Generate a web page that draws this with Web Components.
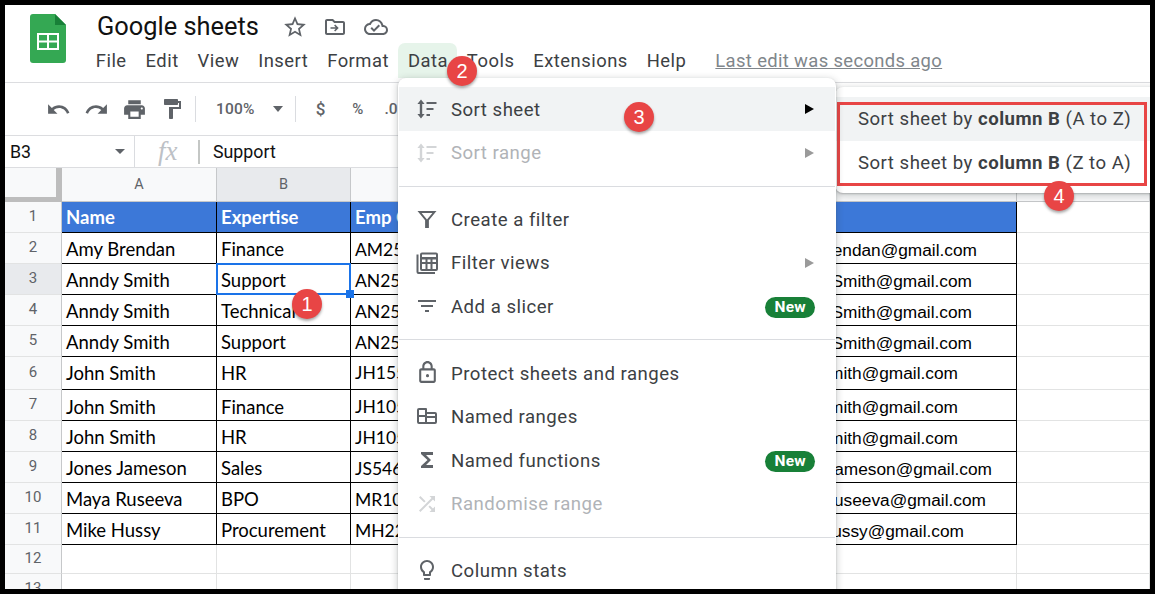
<!DOCTYPE html>
<html><head><meta charset="utf-8">
<style>
html,body{margin:0;padding:0;background:#000;overflow:hidden}
body{font-family:Roboto,"Liberation Sans",sans-serif}
</style></head><body>
<sheet-app></sheet-app>
<script>
const ICONS={
undo:'<path d="M12.5 8c-2.65 0-5.05.99-6.9 2.6L2 7v9h9l-3.62-3.62c1.39-1.16 3.16-1.88 5.12-1.88 3.54 0 6.55 2.31 7.6 5.5l2.37-.78C21.08 11.03 17.15 8 12.5 8z"/>',
redo:'<path d="M18.4 10.6C16.55 8.99 14.15 8 11.5 8c-4.65 0-8.58 3.03-9.96 7.22L3.9 16c1.05-3.19 4.05-5.5 7.6-5.5 1.95 0 3.73.72 5.12 1.88L13 16h9V7l-3.6 3.6z"/>',
print:'<path d="M19 8H5c-1.66 0-3 1.34-3 3v6h4v4h12v-4h4v-6c0-1.66-1.34-3-3-3zm-3 11H8v-5h8v5zm3-7c-.55 0-1-.45-1-1s.45-1 1-1 1 .45 1 1-.45 1-1 1zm-1-9H6v4h12V3z"/>',
paint:'<path d="M18 4V3c0-.55-.45-1-1-1H5c-.55 0-1 .45-1 1v4c0 .55.45 1 1 1h12c.55 0 1-.45 1-1V6h1v4H9v11c0 .55.45 1 1 1h2c.55 0 1-.45 1-1v-9h8V4h-3z"/>',
star:'<path d="M22 9.24l-7.19-.62L12 2 9.19 8.63 2 9.24l5.46 4.73L5.82 21 12 17.27 18.18 21l-1.63-7.03L22 9.24zM12 15.4l-3.76 2.27 1-4.28-3.32-2.88 4.38-.38L12 6.1l1.71 4.04 4.38.38-3.32 2.88 1 4.28L12 15.4z"/>',
move:'<path d="M20 6h-8l-2-2H4c-1.1 0-2 .9-2 2v12c0 1.1.9 2 2 2h16c1.1 0 2-.9 2-2V8c0-1.1-.9-2-2-2zm0 12H4V6h5.17l2 2H20v10z"/><path d="M12.2 9.5l3.5 3.5-3.5 3.5-1.1-1.1 1.6-1.6H7.5v-1.6h5.2l-1.6-1.6z"/>',
cloud:'<path d="M19.35 10.04A7.49 7.49 0 0012 4C9.11 4 6.6 5.64 5.35 8.04A5.994 5.994 0 000 14c0 3.31 2.69 6 6 6h13c2.76 0 5-2.24 5-5 0-2.64-2.05-4.78-4.65-4.96zM19 18H6c-2.21 0-4-1.79-4-4 0-2.05 1.53-3.76 3.56-3.97l1.07-.11.5-.95A5.469 5.469 0 0112 6c2.62 0 4.88 1.86 5.39 4.43l.3 1.5 1.53.11A2.98 2.98 0 0122 15c0 1.65-1.35 3-3 3zm-9-3.82l-2.09-2.09L6.5 13.5 10 17l6.01-6.01-1.41-1.41z"/>',
sort:'<path d="M6 2.5L9.600 7H7.200v10h2.400L6 21.500 2.400 17h2.400V7H2.400z"/><path d="M11.500 5h10v2h-10zM11.500 11h7v2h-7zM11.500 17h3.500v2h-3.500z"/>',
filter:'<path fill-rule="evenodd" d="M2.500 4h19l-7.600 9.200V21h-3.800v-7.800zM6.600 6l5.400 6.600L17.400 6z"/>',
views:'<path d="M1.500 3.500h2V21H20v2H3.500a2 2 0 01-2-2z"/><path fill-rule="evenodd" d="M7 1.500h14a2 2 0 012 2V18a2 2 0 01-2 2H7a2 2 0 01-2-2V3.500a2 2 0 012-2zm0 2V6h14V3.500zm0 5V11h3.500V8.500zm5.500 0V11H15.500V8.500zm5 0V11H21V8.500zM7 13v5h3.500v-5zm5.500 0v5h3v-5zm5 0v5H21v-5z"/>',
slicer:'<path d="M10 18h4v-2h-4v2zM3 6v2h18V6H3zm3 7h12v-2H6v2z"/>',
lock:'<path d="M18 8h-1V6c0-2.760-2.240-5-5-5S7 3.240 7 6v2H6c-1.100 0-2 .9-2 2v10c0 1.100.9 2 2 2h12c1.100 0 2-.9 2-2V10c0-1.100-.9-2-2-2zM9 6c0-1.660 1.340-3 3-3s3 1.340 3 3v2H9V6zm9 14H6V10h12v10zm-6-3.500a1.500 1.500 0 100-3 1.500 1.500 0 000 3z"/>',
ranges:'<path fill-rule="evenodd" d="M4 4h7a1 1 0 011 1v3h8a2 2 0 012 2v8a2 2 0 01-2 2H4a2 2 0 01-2-2V6a2 2 0 012-2zm0 2v5h6V6zm8 4v2h8v-2zm-8 3v5h6v-5zm8 1v4h8v-4z"/>',
sigma:'<path d="M18 4H6v2l6.500 6L6 18v2h12v-3h-7l5-5-5-5h7z"/>',
shuffle:'<path d="M10.590 9.170L5.410 4 4 5.410l5.170 5.170 1.420-1.410zM14.500 4l2.040 2.040L4 18.590 5.410 20 17.960 7.460 20 9.500V4h-5.500zm.33 9.410l-1.410 1.410 3.130 3.130L14.500 20H20v-5.500l-2.040 2.040-3.130-3.130z"/>',
bulb:'<path d="M9 21c0 .55.45 1 1 1h4c.55 0 1-.45 1-1v-1H9v1zm3-19C8.140 2 5 5.140 5 9c0 2.380 1.190 4.470 3 5.740V17c0 .55.45 1 1 1h6c.55 0 1-.45 1-1v-2.260c1.810-1.270 3-3.360 3-5.740 0-3.860-3.140-7-7-7zm2.850 11.100l-.85.6V16h-4v-2.300l-.85-.6A4.997 4.997 0 017 9c0-2.760 2.240-5 5-5s5 2.240 5 5c0 1.630-.8 3.160-2.150 4.100z"/>'
};
function def(name,html,init){
  const t=document.createElement('template');t.innerHTML=html;
  customElements.define(name,class extends HTMLElement{
    connectedCallback(){
      if(this.shadowRoot)return;
      const r=this.attachShadow({mode:'open'});
      r.appendChild(t.content.cloneNode(true));
      if(init)init(this,r);
    }
  });
}
def('g-icon',`<style>:host{display:inline-flex;align-items:center;justify-content:center;color:inherit}svg{display:block;fill:currentColor}</style><svg viewBox="0 0 24 24"></svg>`,(h,r)=>{
  const s=r.querySelector('svg');const z=h.getAttribute('size')||24;
  s.setAttribute('width',z);s.setAttribute('height',z);
  s.innerHTML=ICONS[h.getAttribute('name')];
});
def('num-badge',`<style>:host{position:absolute;width:30px;height:30px;border-radius:50%;background:#e84545;color:#fff;display:flex;align-items:center;justify-content:center;font:400 20px/1 "Liberation Sans",Arial,sans-serif;box-shadow:0 2px 3px rgba(0,0,0,.35);z-index:9}</style><slot></slot>`,(h)=>{
  h.style.left=(+h.getAttribute('cx')-5-15)+'px';h.style.top=(+h.getAttribute('cy')-5-15)+'px';
});
def('doc-logo',`<style>:host{display:block;width:36px;height:49px}</style>
<svg width="36" height="49" viewBox="0 0 36 49"><path d="M3 0h22l11 11v35a3 3 0 01-3 3H3a3 3 0 01-3-3V3a3 3 0 013-3z" fill="#34a853"/><path d="M25 0l11 11H25z" fill="#188038"/><path fill="#fff" fill-rule="evenodd" d="M7 19h22v17H7zm2 2v5.500h8V21zm10 0v5.500h8V21zM9 28.500V34h8v-5.500zm10 0V34h8v-5.500z"/></svg>`);
def('title-bar',`<style>
:host{display:flex;flex:none;height:78px;box-sizing:border-box;border-bottom:1px solid #dcdde0;background:#fff;padding:9px 0 0 25px}
doc-logo{flex:none}
.c{margin-left:31px;display:flex;flex-direction:column}
.t{display:flex;align-items:center;height:29px;margin-top:-2px}
h1{font:400 25.400px/29px Roboto,sans-serif;color:#111;margin:0 23px 0 0}
g-icon{color:#5f6368}
nav{display:flex;align-items:flex-start;height:35px;margin-top:2px;font:400 18.400px/35px Roboto,sans-serif;letter-spacing:.5px;color:#3c4043;white-space:nowrap;margin-left:-10.700px}
nav span{padding:0 9.450px;height:35px}
nav .on{background:#e6f4ea;border-radius:7px 7px 0 0}
nav a{margin-left:19.500px;color:#80868b;text-decoration:underline;letter-spacing:.36px}
</style>
<doc-logo></doc-logo>
<div class="c"><div class="t"><h1>Google sheets</h1>
<g-icon name="star" size="26"></g-icon><g-icon name="move" size="24" style="margin-left:15px"></g-icon><g-icon name="cloud" size="24" style="margin-left:17px"></g-icon></div>
<nav><span>File</span><span>Edit</span><span>View</span><span>Insert</span><span>Format</span><span class="on">Data</span><span>Tools</span><span>Extensions</span><span>Help</span><a>Last edit was seconds ago</a></nav></div>`);
def('tool-bar',`<style>
:host{display:flex;flex:none;height:53px;box-sizing:border-box;border-bottom:1px solid #dcdde0;background:#fff;align-items:center;padding:0 0 0 34px;color:#5f6368;font:500 15.500px Roboto,sans-serif;white-space:nowrap;overflow:hidden}
.b{width:38px;display:flex;justify-content:center}
.s{width:1px;height:26px;background:#dadce0}
.c{width:0;height:0;border:5px solid transparent;border-top:6px solid #5f6368;border-bottom:0}
</style>
<div class="b"><g-icon name="undo" size="25"></g-icon></div><div class="b"><g-icon name="redo" size="25"></g-icon></div><div class="b"><g-icon name="print" size="25"></g-icon></div><div class="b"><g-icon name="paint" size="24"></g-icon></div>
<div class="s" style="margin-left:4px"></div><span style="margin-left:20px;letter-spacing:.2px">100%</span><div class="c" style="margin-left:18px"></div><div class="s" style="margin-left:12px"></div>
<span style="margin-left:20px;font-size:17px">$</span><span style="margin-left:27px;font-size:15px">%</span><span style="margin-left:21px">.0</span>`);
def('formula-bar',`<style>
:host{display:flex;flex:none;height:32px;box-sizing:border-box;border-bottom:1px solid #dcdde0;background:#fff;align-items:center;padding-left:5px;white-space:nowrap;overflow:hidden;font:400 17.800px Roboto,sans-serif;color:#111}
.n{width:105px}
.c{width:0;height:0;border:5px solid transparent;border-top:5px solid #5f6368;border-bottom:0}
.s{width:1px;background:#dadce0}
i{font:italic 400 27px "Liberation Serif",serif;color:#bdc1c6;margin-left:23px;width:40px}
</style><span class="n">B3</span><div class="c"></div><div class="s" style="height:32px;margin-left:9px"></div><i>fx</i><div class="s" style="height:24px;background:#c4c7c5;width:2px"></div><span style="margin-left:13px">Support</span>`);
const DATA=[
['Name','Expertise','Emp Code','','',],
['Amy Brendan','Finance','AM2546','Brendan@gmail.com',978],
['Anndy Smith','Support','AN2546','Smith@gmail.com',973],
['Anndy Smith','Technical','AN2547','Smith@gmail.com',973],
['Anndy Smith','Support','AN2548','Smith@gmail.com',973],
['John Smith','HR','JH1554','Smith@gmail.com',959],
['John Smith','Finance','JH1054','Smith@gmail.com',959],
['John Smith','HR','JH1055','Smith@gmail.com',959],
['Jones Jameson','Sales','JS5461','Jameson@gmail.com',993],
['Maya Ruseeva','BPO','MR1026','Ruseeva@gmail.com',987],
['Mike Hussy','Procurement','MH2235','Hussy@gmail.com',965]];
def('sheet-grid',`<style>
:host{display:grid;flex:1;min-height:0;overflow:hidden;background:#fff;grid-template-columns:57px 155px 134px 349px 317px 133px;grid-template-rows:34px 31px 31px 31px 31px 31px 33px 31px 31px 31px 31px 31px 29px 31px;color:#000;font:400 18.500px/1 Lato,Carlito,sans-serif}
div{box-sizing:border-box;white-space:nowrap;overflow:hidden;min-width:0}
.corner{border-right:6px solid #bdbdbd;border-bottom:5px solid #bdbdbd;background-color:#f8f9fa}
.ch{background:#f8f9fa;border-right:1px solid #c6c8ca;border-bottom:1px solid #c6c8ca;display:flex;align-items:center;justify-content:center;color:#5f6368;font:400 14.500px Roboto,sans-serif;padding-bottom:1px}
.ch.on,.rh.on{background:#e8eaed}
.rh{background:#f8f9fa;border-right:1px solid #c6c8ca;border-bottom:1px solid #e2e3e3;display:flex;align-items:center;justify-content:center;color:#5f6368;font:400 15px Roboto,sans-serif;padding-bottom:2px}
.c{border-right:1px solid #e2e3e3;border-bottom:1px solid #e2e3e3;display:flex;align-items:center;padding:3px 4px 0}
.t{border-right-color:#000;border-bottom-color:#000}
.h{background:#3c78d8;color:#fff;font-weight:700;font-size:18.500px;padding-top:0}
.k{font-size:17.500px}
.m{font:400 17.300px "Liberation Sans",Arial,sans-serif;justify-content:flex-end;padding:4px 0 0 0}
.sel{box-shadow:inset 0 0 0 2px #1a73e8;overflow:visible;position:relative;border-right:0;border-bottom:0;margin:-1px 0 0 -1px;padding-left:5px;padding-top:3px}
.sel::after{content:"";position:absolute;right:-3px;bottom:-3px;width:8px;height:8px;background:#1a73e8;z-index:3}
</style><span id="x" style="display:contents"></span>`,(h,r)=>{
  let o='<div class="corner"></div>';
  ['A','B','C','D',''].forEach((c,i)=>o+=`<div class="ch${i==1?' on':''}">${c}</div>`);
  for(let i=0;i<13;i++){
    o+=`<div class="rh${i==2?' on':''}">${i+1}</div>`;
    const d=DATA[i];
    const pad=i==5?' style="padding-top:2px;padding-bottom:2px"':i==6?' style="padding-top:4px"':'';
    if(d){
      const cl=i==0?' t h':' t';
      o+=`<div class="c${cl}"${pad}>${d[0]}</div>`;
      o+=`<div class="c${cl}${i==2?' sel':''}"${pad}>${d[1]}</div>`;
      o+=`<div class="c${cl}${i?' k':''}"${pad}>${d[2]}</div>`;
      const mp=i==5?'padding-top:1px;':i==6?'padding-top:5px;':'';
      o+= i==0?`<div class="c${cl}"></div>`:`<div class="c t m" style="${mp}padding-right:${1017-d[4]}px">${d[3]}</div>`;
      o+=`<div class="c"></div>`;
    } else o+='<div class="c"></div><div class="c"></div><div class="c"></div><div class="c"></div><div class="c"></div>';
  }
  r.getElementById('x').innerHTML=o;
});
def('menu-item',`<style>
:host{display:flex;align-items:center;height:43.750px;color:#3c4043;font:400 18.600px Roboto,sans-serif;letter-spacing:.49px;white-space:nowrap}
:host([on]){background:#f1f3f4}
:host([dis]){color:#b0b3b7}
.i{width:52px;display:flex;justify-content:center;flex:none;padding-left:4px;box-sizing:border-box;color:#5f6368}
:host([dis]) .i{color:#d3d5d7}
.x{padding-top:1px}
:host([nudge]) .x{padding-top:3px}
.sp{flex:1}
.a{width:0;height:0;border:5px solid transparent;border-left:9px solid #9a9a9a;border-right:0;margin-right:21px}
:host([on]) .a{border-left-color:#000}
.n{background:#188038;color:#fff;font:700 15.500px/21px Roboto,sans-serif;border-radius:11px;padding:0 9px;margin:2px 20px 0 0;letter-spacing:.3px;height:21px}
</style><div class="i"></div><span class="x"><slot></slot></span><span class="sp"></span><span id="e"></span>`,(h,r)=>{
  const g=document.createElement('g-icon');
  g.setAttribute('name',h.getAttribute('icon'));
  g.setAttribute('size',h.getAttribute('icon')=='lock'?'25':'24');
  r.querySelector('.i').appendChild(g);
  const e=r.getElementById('e');
  if(h.hasAttribute('sub'))e.className='a';
  else if(h.hasAttribute('new')){e.className='n';e.textContent='New';}
  else e.remove();
});
def('menu-sep',`<style>:host{display:block;height:1px;background:#dadce0;margin:11px 0 10.500px}</style>`);
def('data-menu',`<style>:host{position:absolute;left:393px;top:73px;width:438px;height:520px;background:#fff;padding:9px 1px 0;box-sizing:border-box;border-radius:8px 8px 0 0;box-shadow:0 2px 6px 2px rgba(60,64,67,.18),0 1px 2px rgba(60,64,67,.3);z-index:5;overflow:hidden}</style><slot></slot>`);
def('sub-menu',`<style>
:host{position:absolute;left:830px;top:82px;width:330px;height:106px;background:#fff;box-sizing:border-box;padding-top:10px;border-radius:8px;box-shadow:0 2px 6px 2px rgba(60,64,67,.18),0 1px 2px rgba(60,64,67,.3);z-index:4;color:#3c4043;font:400 18.600px Roboto,sans-serif;letter-spacing:.49px;white-space:nowrap}
.r{height:43.500px;display:flex;align-items:center;padding-left:23px}
.o{background:#f1f3f4}
.l{padding-top:2px}
.box{position:absolute;left:2px;top:15px;width:310px;height:84px;box-sizing:border-box;border:3px solid #e84545}
b{font-weight:700;color:#3c4043}
</style><div class="r o"><span>Sort sheet by <b>column B</b> (A to Z)</span></div><div class="r"><span class="l">Sort sheet by <b>column B</b> (Z to A)</span></div><div class="box"></div>`);
def('sheet-app',`<style>
:host{display:flex;flex-direction:column;position:relative;width:1145px;height:584px;margin:5px;background:#fff;overflow:hidden}
</style>
<title-bar></title-bar><tool-bar></tool-bar><formula-bar></formula-bar><sheet-grid></sheet-grid>
<sub-menu></sub-menu>
<data-menu>
<menu-item icon="sort" on sub nudge>Sort sheet</menu-item>
<menu-item icon="sort" dis sub>Sort range</menu-item>
<menu-sep></menu-sep>
<menu-item icon="filter" nudge>Create a filter</menu-item>
<menu-item icon="views" sub>Filter views</menu-item>
<menu-item icon="slicer" new>Add a slicer</menu-item>
<menu-sep></menu-sep>
<menu-item icon="lock" nudge>Protect sheets and ranges</menu-item>
<menu-item icon="ranges">Named ranges</menu-item>
<menu-item icon="sigma" new>Named functions</menu-item>
<menu-item icon="shuffle" dis>Randomise range</menu-item>
<menu-sep></menu-sep>
<menu-item icon="bulb">Column stats</menu-item>
</data-menu>
<num-badge cx="307" cy="304">1</num-badge><num-badge cx="462" cy="71">2</num-badge><num-badge cx="639" cy="117">3</num-badge><num-badge cx="1059" cy="196">4</num-badge>`);
</script>
</body></html>
